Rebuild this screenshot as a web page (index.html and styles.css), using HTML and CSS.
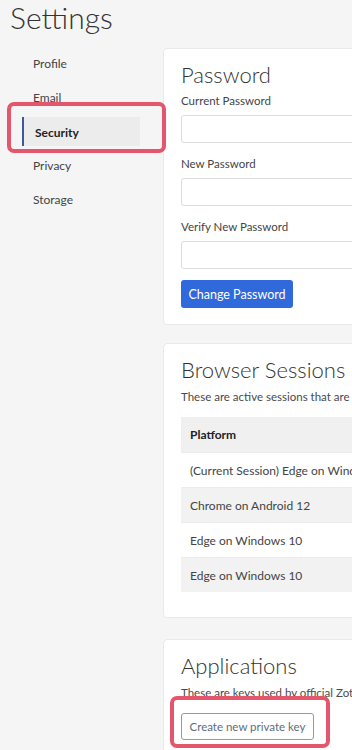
FILE: index.html
```html
<!DOCTYPE html>
<html lang="en">
<head>
<meta charset="utf-8">
<title>Settings</title>
<link rel="stylesheet" href="styles.css">
</head>
<body>
<div class="page">
  <h1 class="title">Settings</h1>
  <div class="layout">
    <nav class="sidebar">
      <ul class="nav">
        <li class="nav-item">Profile</li>
        <li class="nav-item">Email</li>
        <li class="nav-item active">Security</li>
        <li class="nav-item">Privacy</li>
        <li class="nav-item">Storage</li>
      </ul>
    </nav>
    <main class="main">
      <section class="card card-password">
        <h2 class="card-title">Password</h2>
        <label class="field-label">Current Password</label>
        <input class="field" type="password">
        <label class="field-label">New Password</label>
        <input class="field" type="password">
        <label class="field-label">Verify New Password</label>
        <input class="field" type="password">
        <button class="btn-primary" type="button">Change Password</button>
      </section>
      <section class="card card-sessions">
        <h2 class="card-title">Browser Sessions</h2>
        <p class="card-desc">These are active sessions that are currently logged in to your account.</p>
        <table class="sessions">
          <thead>
            <tr><th>Platform</th><th>Last Used</th></tr>
          </thead>
          <tbody>
            <tr><td>(Current Session) Edge on Windows 10</td><td>Now</td></tr>
            <tr><td>Chrome on Android 12</td><td>Today</td></tr>
            <tr><td>Edge on Windows 10</td><td>Today</td></tr>
            <tr><td>Edge on Windows 10</td><td>Yesterday</td></tr>
          </tbody>
        </table>
      </section>
      <section class="card card-apps">
        <h2 class="card-title">Applications</h2>
        <p class="card-desc">These are keys used by official Zotero applications.</p>
        <button class="btn-outline" type="button">Create new private key</button>
      </section>
    </main>
  </div>
  <div class="mark mark-security"></div>
  <div class="mark mark-key"></div>
</div>
</body>
</html>
```

FILE: styles.css
```css
html, body {
  margin: 0;
  padding: 0;
  overflow: hidden;
  background: #f5f5f5;
}
body {
  font-family: Lato, "Open Sans", "Liberation Sans", sans-serif;
  color: #333;
  width: 352px;
  height: 750px;
}
.page {
  position: relative;
  width: 352px;
  height: 750px;
  overflow: hidden;
}
.title {
  margin: 0;
  padding-left: 10px;
  font-size: 30px;
  line-height: 34px;
  font-weight: 300;
  color: #333;
}
.layout {
  display: flex;
  margin-top: 14px;
}
.sidebar {
  flex: 0 0 163px;
}
.nav {
  list-style: none;
  margin: 1px 0 0 22px;
  padding: 0;
  width: 118px;
  display: flex;
  flex-direction: column;
  gap: 5px;
}
.nav-item {
  height: 29px;
  line-height: 29px;
  padding-left: 11px;
  font-size: 12px;
  color: #444;
  box-sizing: border-box;
}
.nav-item.active {
  background: #ececec;
  border-left: 2px solid #3c5a9a;
  font-weight: 700;
  color: #222;
  line-height: 32px;
}
.main {
  flex: 0 0 430px;
  display: flex;
  flex-direction: column;
  gap: 18px;
}
.card {
  background: #fff;
  border: 1px solid #e9e9e9;
  border-radius: 4px;
  padding: 13px 17px 16px;
  display: flex;
  flex-direction: column;
  align-items: flex-start;
}
.card-title {
  margin: 0;
  font-size: 22px;
  line-height: 26px;
  font-weight: 300;
  color: #333;
}
.field-label {
  font-size: 11.5px;
  line-height: 16px;
  color: #444;
  margin-top: 13px;
  margin-bottom: 6px;
}
.card-title + .field-label {
  margin-top: 5px;
}
.field {
  width: 100%;
  height: 28px;
  box-sizing: border-box;
  border: 1px solid #dcdcdc;
  border-radius: 3px;
  background: #fff;
  margin: 0;
}
.btn-primary {
  margin-top: 11px;
  width: 112px;
  height: 28px;
  border: 0;
  border-radius: 3px;
  background: #2f69db;
  color: #fff;
  font-family: inherit;
  font-size: 12.5px;
  padding: 0;
}
.card-desc {
  margin: 6px 0 0;
  font-size: 11.5px;
  line-height: 16px;
  color: #4a4a4a;
  white-space: nowrap;
}
.card-sessions {
  padding-bottom: 25px;
}
.sessions {
  margin-top: 12px;
  width: 100%;
  border-collapse: collapse;
  font-size: 12px;
  color: #444;
}
.sessions th,
.sessions td {
  text-align: left;
  padding: 0 9px;
  white-space: nowrap;
}
.sessions th {
  height: 35px;
  background: #f0f0f0;
  font-weight: 700;
  color: #222;
}
.sessions td {
  height: 34px;
  border-top: 1px solid #ececec;
}
.sessions tbody tr:nth-child(even) td {
  background: #f2f2f2;
}
.card-apps {
  margin-top: 3px;
  padding-bottom: 30px;
}
.btn-outline {
  margin-top: 12px;
  width: 133px;
  height: 27px;
  border: 1px solid #8c9bab;
  border-radius: 3px;
  background: #fff;
  color: #5d6d7e;
  font-family: inherit;
  font-size: 11.5px;
  padding: 0;
}
.mark {
  position: absolute;
  border: 4px solid #e4566b;
  border-radius: 7px;
  box-sizing: border-box;
}
.mark-security {
  left: 7px;
  top: 102px;
  width: 159px;
  height: 51px;
}
.mark-key {
  left: 170px;
  top: 696px;
  width: 160px;
  height: 52px;
}
```
